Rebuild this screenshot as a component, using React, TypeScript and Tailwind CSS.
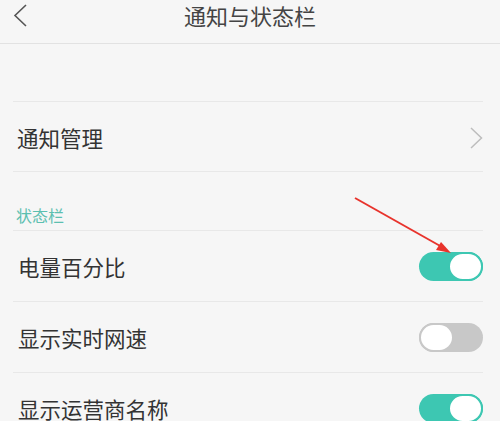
import React from "react";

function Toggle({ on }: { on: boolean }) {
  return (
    <div
      className={`flex h-[29px] w-[64px] rounded-full ${
        on ? "justify-end bg-[#3dc7b2]" : "justify-start bg-[#c8c8c8]"
      }`}
    >
      <div
        className={`h-full w-[35px] rounded-full border-2 bg-white ${
          on ? "border-[#3dc7b2]" : "border-[#c8c8c8]"
        }`}
      />
    </div>
  );
}

const switches = [
  { label: "电量百分比", on: true },
  { label: "显示实时网速", on: false },
  { label: "显示运营商名称", on: true },
];

export default function App() {
  return (
    <div
      className="relative h-[421px] w-[500px] overflow-hidden bg-[#f6f6f6] text-[#333]"
      style={{ fontFamily: '"Noto Sans CJK SC", "Noto Sans", sans-serif' }}
    >
      <div className="relative flex h-[44px] items-start justify-center border-b border-[#e2e2e2]">
        <svg className="absolute left-[12px] top-[4px]" width="16" height="23" viewBox="0 0 16 23">
          <path d="M14 1 L3 11.5 L14 22" fill="none" stroke="#555" strokeWidth="1.6" />
        </svg>
        <span className="pt-[2px] text-[22px] leading-[26px] text-[#444]">通知与状态栏</span>
      </div>

      <div className="ml-[13px] mr-[17px] mt-[57px] border-t border-[#e8e8e8]">
        <div className="flex h-[70px] items-center justify-between border-b border-[#e8e8e8] pl-[4px]">
          <span className="pt-[3px] text-[21.5px] leading-none">通知管理</span>
          <svg width="13" height="22" viewBox="0 0 13 22" className="mt-[3px]">
            <path d="M1 1 L11.5 11 L1 21" fill="none" stroke="#bdbdbd" strokeWidth="1.5" />
          </svg>
        </div>

        <div className="h-[59px] border-b border-[#e8e8e8] pl-[3px] pt-[31px]">
          <span className="text-[16px] leading-none text-[#5cbfb0]">状态栏</span>
        </div>

        {switches.map((s) => (
          <div
            key={s.label}
            className="flex h-[71px] items-center justify-between border-b border-[#e8e8e8] pl-[5px]"
          >
            <span className="pt-[2px] text-[21.5px] leading-none">{s.label}</span>
            <Toggle on={s.on} />
          </div>
        ))}
      </div>

      <svg className="absolute left-0 top-0" width="500" height="421" viewBox="0 0 500 421">
        <line x1="355" y1="198" x2="442" y2="247" stroke="#e8332c" strokeWidth="2" />
        <polygon points="451,253 436,250 441,242" fill="#e8332c" />
      </svg>
    </div>
  );
}
